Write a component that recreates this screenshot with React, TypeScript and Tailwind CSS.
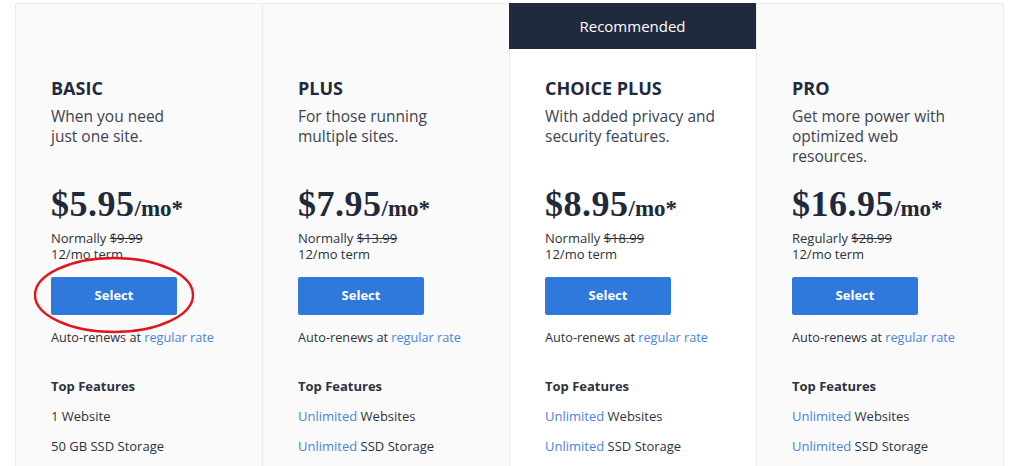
import React from "react";

type Plan = {
  name: string;
  desc: string[];
  price: string;
  label: string;
  was: string;
  features: { link?: string; text: string }[];
  recommended?: boolean;
};

const plans: Plan[] = [
  {
    name: "BASIC",
    desc: ["When you need", "just one site."],
    price: "$5.95",
    label: "Normally",
    was: "$9.99",
    features: [{ text: "1 Website" }, { text: "50 GB SSD Storage" }],
  },
  {
    name: "PLUS",
    desc: ["For those running", "multiple sites."],
    price: "$7.95",
    label: "Normally",
    was: "$13.99",
    features: [
      { link: "Unlimited", text: " Websites" },
      { link: "Unlimited", text: " SSD Storage" },
    ],
  },
  {
    name: "CHOICE PLUS",
    desc: ["With added privacy and", "security features."],
    price: "$8.95",
    label: "Normally",
    was: "$18.99",
    recommended: true,
    features: [
      { link: "Unlimited", text: " Websites" },
      { link: "Unlimited", text: " SSD Storage" },
    ],
  },
  {
    name: "PRO",
    desc: ["Get more power with", "optimized web", "resources."],
    price: "$16.95",
    label: "Regularly",
    was: "$28.99",
    features: [
      { link: "Unlimited", text: " Websites" },
      { link: "Unlimited", text: " SSD Storage" },
    ],
  },
];

function Card({ plan, first }: { plan: Plan; first: boolean }) {
  return (
    <div
      className={`flex flex-col border-t border-r border-[#ececec] ${
        first ? "border-l" : ""
      } ${plan.recommended ? "bg-white border-t-0" : "bg-[#fafafa]"}`}
    >
      {plan.recommended ? (
        <div className="h-[46px] bg-[#1f2a3d] flex items-center justify-center text-white text-[15px] leading-[20px] -ml-px">
          Recommended
        </div>
      ) : null}
      <div
        className={`pl-[35px] pr-4 pb-10 ${
          plan.recommended ? "pt-[27px]" : "pt-[72px]"
        }`}
      >
        <div className="text-[18px] leading-[24px] font-bold text-[#1f2a3d]">
          {plan.name}
        </div>
        <div className="mt-[6px] h-[60px] text-[15.5px] leading-[20px] text-[#3d4350]">
          {plan.desc.map((d, i) => (
            <div key={i}>{d}</div>
          ))}
        </div>
        <div
          className="mt-[18px] h-[40px] leading-[40px] font-bold text-[#1f2a3d] whitespace-nowrap"
          style={{ fontFamily: '"Liberation Serif", "DejaVu Serif", serif' }}
        >
          <span className="text-[36px] tracking-[0.5px]">{plan.price}</span>
          <span className="text-[23px]">/mo*</span>
        </div>
        <div className="mt-[6px] text-[13px] leading-[16px] text-[#2d323c]">
          <div>
            {plan.label} <span className="line-through">{plan.was}</span>
          </div>
          <div>12/mo term</div>
        </div>
        <button className="mt-[15px] w-[126px] h-[38px] rounded-[2px] bg-[#2f78dc] text-white text-[13px] font-bold">
          Select
        </button>
        <div className="mt-[14px] text-[12.7px] leading-[16px] text-[#2d323c]">
          Auto-renews at <span className="text-[#4a84e0]">regular rate</span>
        </div>
        <div className="mt-[33px] text-[13px] leading-[16px] font-bold text-[#2d323c]">
          Top Features
        </div>
        {plan.features.map((f, i) => (
          <div
            key={i}
            className="mt-[14px] text-[13px] leading-[16px] text-[#2d323c]"
          >
            {f.link ? <span className="text-[#4a84e0]">{f.link}</span> : null}
            {f.text}
          </div>
        ))}
      </div>
    </div>
  );
}

export default function App() {
  return (
    <div
      className="relative w-[1024px] h-[466px] overflow-hidden bg-white"
      style={{ fontFamily: '"Open Sans", "Liberation Sans", sans-serif' }}
    >
      <div className="pt-[3px] pl-[15px]">
        <div className="grid grid-cols-[248px_247px_247px_247px] h-[520px]">
          {plans.map((p, i) => (
            <Card key={p.name} plan={p} first={i === 0} />
          ))}
        </div>
      </div>
      <svg
        className="absolute left-0 top-0 pointer-events-none"
        width="1024"
        height="466"
      >
        <ellipse
          cx="114"
          cy="295"
          rx="79"
          ry="37"
          fill="none"
          stroke="#e3141b"
          strokeWidth="2.4"
        />
      </svg>
    </div>
  );
}
